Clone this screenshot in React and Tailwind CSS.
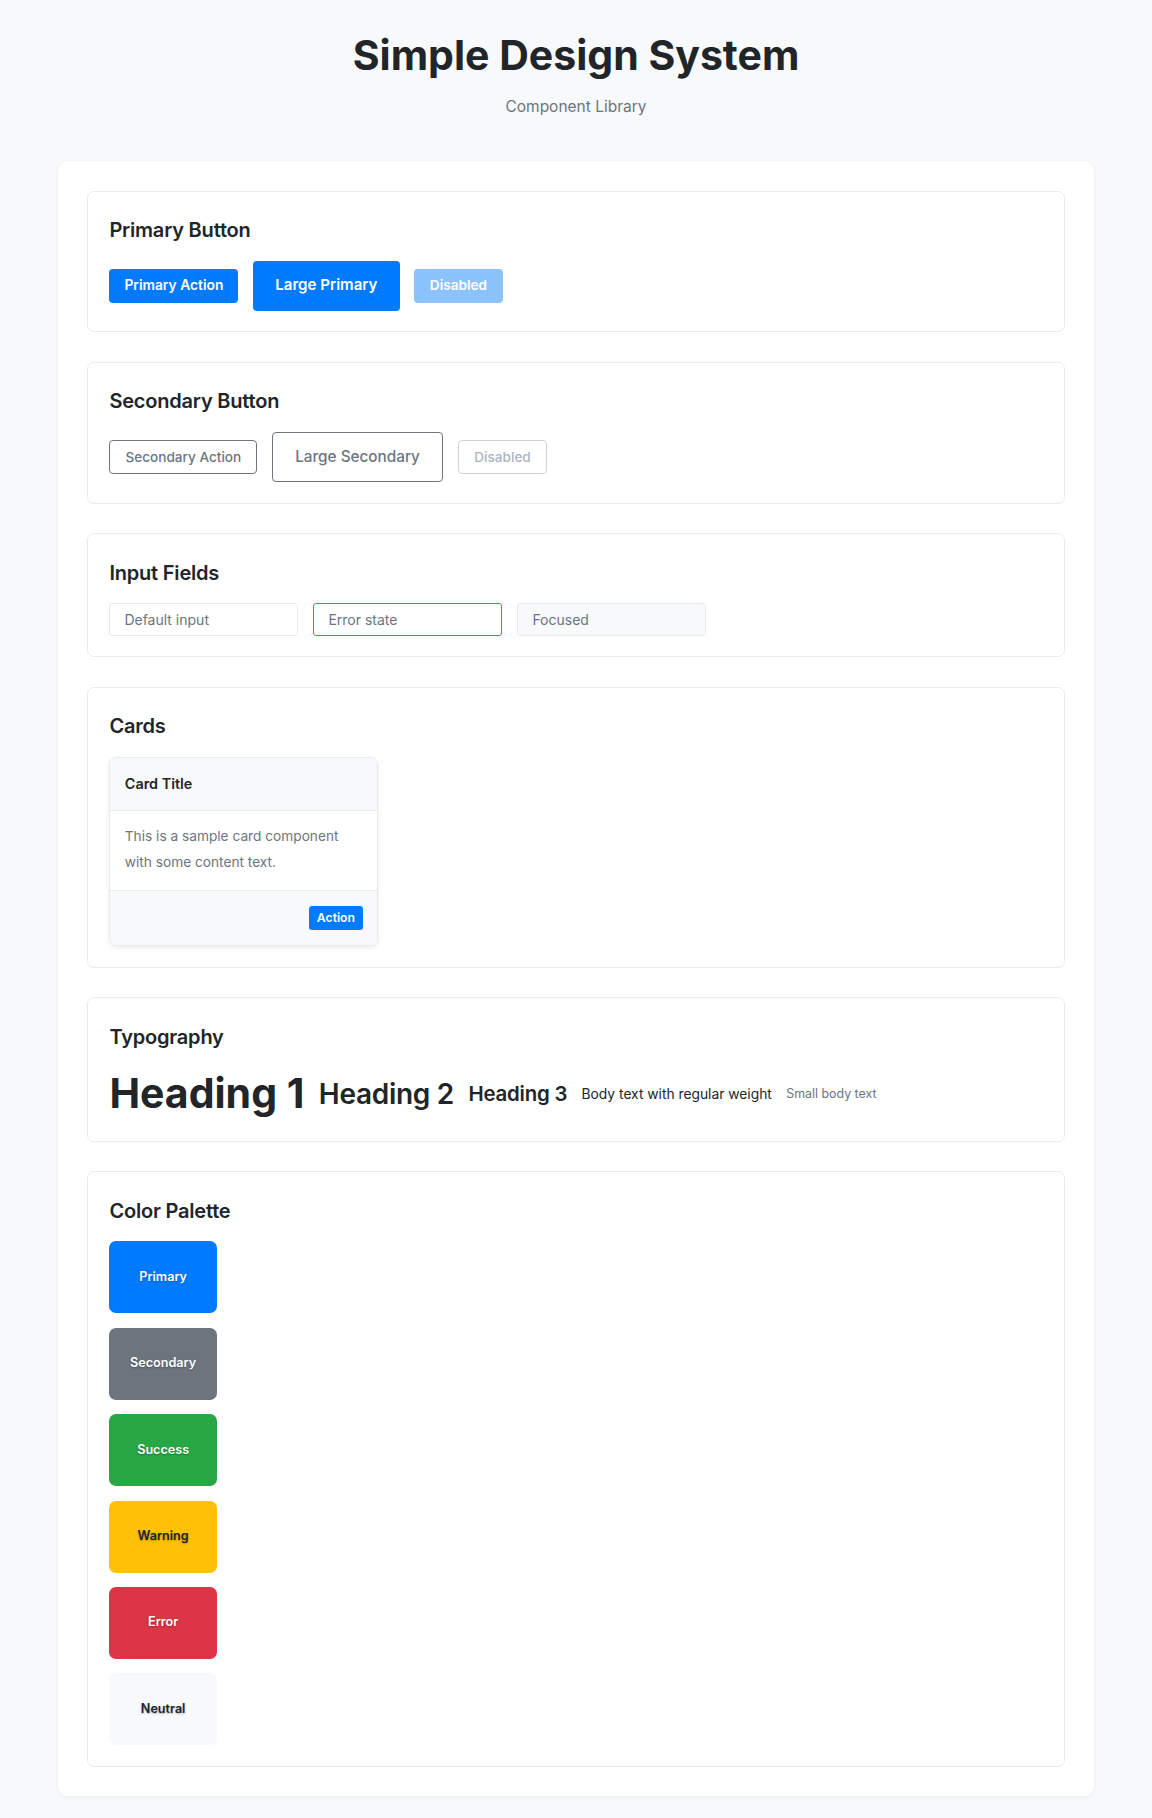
import React from "react";

const font = { fontFamily: "Inter, 'Noto Sans', sans-serif" };

function Section({ title, children }) {
  return (
    <section className="border border-[#e9ecef] rounded-[7px] bg-white px-[21.6px] pt-[23.5px] pb-[20.5px]">
      <h2 className="text-[20px] leading-[30px] font-semibold text-[#212529] mb-[15.5px] tracking-[-0.01em]">{title}</h2>
      {children}
    </section>
  );
}

const swatches = [
  { name: "Primary", bg: "bg-[#007bff]", text: "text-white" },
  { name: "Secondary", bg: "bg-[#6c757d]", text: "text-white" },
  { name: "Success", bg: "bg-[#28a745]", text: "text-white" },
  { name: "Warning", bg: "bg-[#ffc107]", text: "text-[#212529]" },
  { name: "Error", bg: "bg-[#dc3545]", text: "text-white" },
  { name: "Neutral", bg: "bg-[#f8f9fa]", text: "text-[#212529]" },
];

export default function App() {
  return (
    <div style={font} className="min-h-[1818px] bg-[#f8f9fa] px-[58px] pt-[30px] pb-[22px]">
      <header className="text-center">
        <h1 className="text-[41px] leading-[50px] font-bold text-[#212529]">Simple Design System</h1>
        <p className="mt-[15px] text-[15.5px] leading-[23px] text-[#6c757d]">Component Library</p>
      </header>

      <main className="mt-[43px] bg-white rounded-[10px] shadow-[0_1px_4px_rgba(0,0,0,0.06)] p-[28.8px] pt-[29.7px] flex flex-col gap-[29.5px]">
        <Section title="Primary Button">
          <div className="flex items-center gap-[14.4px]">
            <button className="h-[34px] px-[15px] rounded-[4px] bg-[#007bff] text-white text-[13.8px] font-semibold">Primary Action</button>
            <button className="h-[50px] px-[22.5px] rounded-[4px] bg-[#007bff] text-white text-[15.1px] font-semibold">Large Primary</button>
            <button className="h-[34px] px-[15.5px] rounded-[4px] bg-[#007bff] opacity-45 text-white text-[13.6px] font-semibold">Disabled</button>
          </div>
        </Section>

        <Section title="Secondary Button">
          <div className="flex items-center gap-[14.4px]">
            <button className="h-[34px] px-[15px] rounded-[4px] border border-[#6c757d] bg-white text-[#6c757d] text-[13.6px] font-medium">Secondary Action</button>
            <button className="h-[50.6px] px-[22.5px] rounded-[4px] border border-[#6c757d] bg-white text-[#6c757d] text-[15.3px] font-medium">Large Secondary</button>
            <button className="h-[34px] px-[15.5px] rounded-[4px] border border-[#ced4da] bg-white text-[#adb5bd] text-[13.6px] font-medium">Disabled</button>
          </div>
        </Section>

        <Section title="Input Fields">
          <div className="flex items-center gap-[15px]">
            <div className="w-[189px] h-[32.7px] flex items-center px-[14px] rounded-[3px] border border-[#e9ecef] bg-white text-[14px] text-[#6c757d]">Default input</div>
            <div className="w-[189px] h-[32.7px] flex items-center px-[14px] rounded-[3px] border border-[#e0505e] bg-white text-[14px] text-[#6c757d]">Error state</div>
            <div className="w-[189px] h-[32.7px] flex items-center px-[14px] rounded-[3px] border border-[#e9ecef] bg-[#f8f9fa] text-[14px] text-[#6c757d]">Focused</div>
          </div>
        </Section>

        <Section title="Cards">
          <div className="w-[269px] rounded-[7px] border border-[#e9ecef] overflow-hidden shadow-[0_2px_4px_rgba(0,0,0,0.08)]">
            <div className="h-[53px] bg-[#f8f9fa] border-b border-[#e9ecef] px-[14.4px] flex items-center">
              <h3 className="text-[14.4px] font-semibold text-[#212529]">Card Title</h3>
            </div>
            <div className="h-[79px] bg-white px-[14.4px] pt-[13px]">
              <p className="text-[13.7px] leading-[25.7px] text-[#6c757d]">This is a sample card component with some content text.</p>
            </div>
            <div className="h-[55.4px] bg-[#f8f9fa] border-t border-[#e9ecef] px-[14.4px] flex items-center justify-end">
              <button className="h-[24px] px-[8px] rounded-[3px] bg-[#007bff] text-white text-[12.2px] font-semibold">Action</button>
            </div>
          </div>
        </Section>

        <Section title="Typography">
          <div className="flex items-center gap-[14.4px] text-[#212529]">
            <span className="text-[41px] leading-[53px] font-bold">Heading 1</span>
            <span className="text-[28px] leading-[34px] font-semibold tracking-[-0.01em]">Heading 2</span>
            <span className="text-[20.4px] leading-[26px] font-semibold tracking-[-0.01em]">Heading 3</span>
            <span className="text-[13.8px] leading-[20px]">Body text with regular weight</span>
            <span className="text-[12.4px] leading-[18px] text-[#6c757d]">Small body text</span>
          </div>
        </Section>

        <Section title="Color Palette">
          <div className="flex flex-col gap-[14.4px]">
            {swatches.map((s) => (
              <div key={s.name} className={`w-[107.5px] h-[72px] rounded-[7px] flex items-center justify-center ${s.bg}`}>
                <span className={`text-[12.6px] font-semibold [text-shadow:0_1px_2px_rgba(0,0,0,0.3)] ${s.text}`}>{s.name}</span>
              </div>
            ))}
          </div>
        </Section>
      </main>
    </div>
  );
}
